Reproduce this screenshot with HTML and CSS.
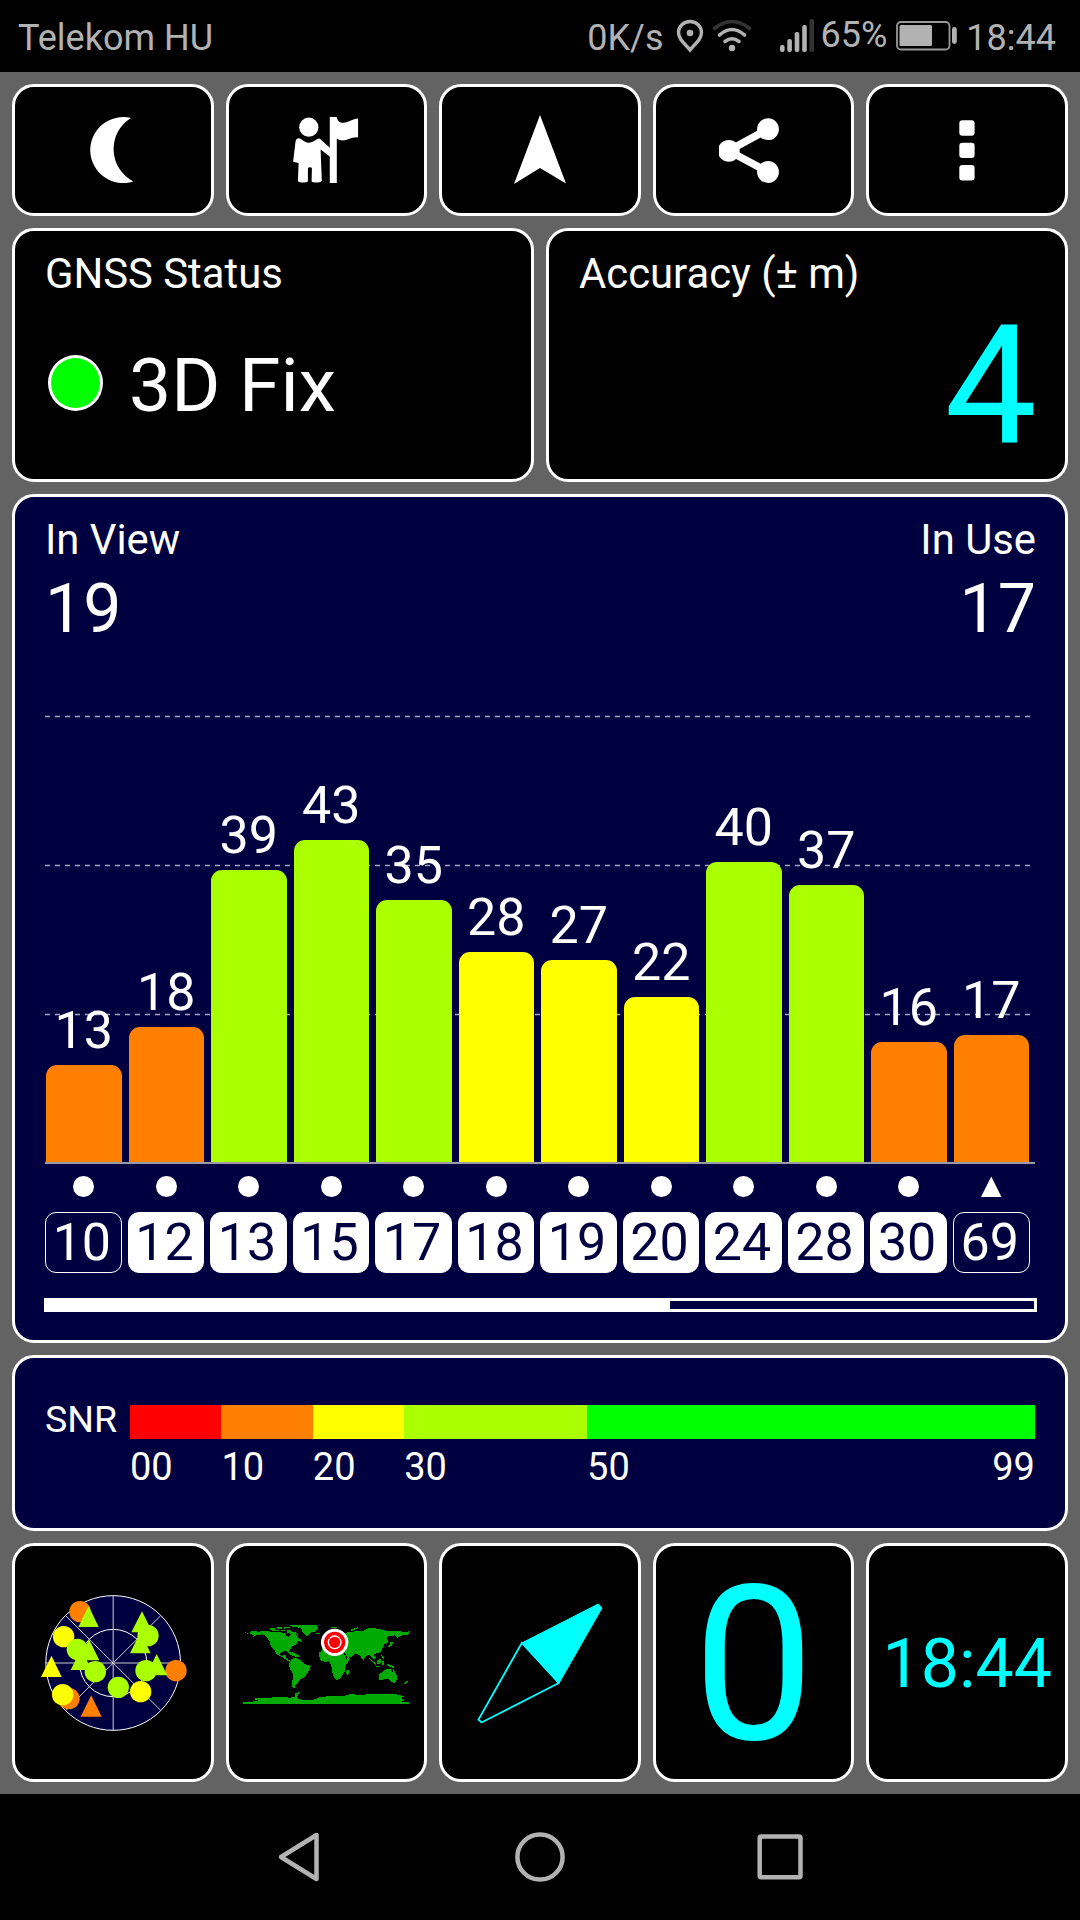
FILE: index.html
```
<!DOCTYPE html>
<html lang="en">
<head>
    <meta charset="UTF-8">
    <meta name="viewport" content="width=device-width, initial-scale=1.0">
    <title>GNSS Status</title>
    <link rel="stylesheet" href="styles.css">
</head>
<body>

<header class="statusbar">
    <span class="carrier">Telekom HU</span>
    <span class="speed">0K/s</span>
    <svg class="pin-icon" width="28" height="34" viewBox="0 0 28 34">
        <path d="M14 2.500C7.500 2.500 2.500 7.500 2.500 13.500C2.500 21 9.500 25 14 31C18.500 25 25.500 21 25.500 13.500C25.500 7.500 20.500 2.500 14 2.500Z" fill="none" stroke="#b2b2b2" stroke-width="3.400"/>
        <circle cx="14" cy="14" r="3.300" fill="#b2b2b2"/>
    </svg>
    <svg class="wifi-icon" width="40" height="34" viewBox="0 0 40 34" fill="none" stroke="#b2b2b2" stroke-width="3.600" stroke-linecap="round">
        <path d="M2.500 9.500Q20-4.500 37.500 9.500" stroke="#333"/>
        <path d="M7.500 16Q20 5 32.500 16"/>
        <path d="M13 22.500Q20 17 27 22.500"/>
        <circle cx="20" cy="29" r="3.200" fill="#b2b2b2" stroke="none"/>
    </svg>
    <svg class="signal-icon" width="36" height="34" viewBox="0 0 36 34" fill="#b2b2b2">
        <rect x="1" y="26" width="4.600" height="7" rx="2"/>
        <rect x="8.300" y="20" width="4.600" height="13" rx="2"/>
        <rect x="15.700" y="13" width="4.600" height="20" rx="2"/>
        <rect x="23.200" y="6" width="4.600" height="27" rx="2"/>
        <rect x="30.500" y="0" width="4.600" height="33" rx="2" fill="#333"/>
    </svg>
    <span class="percent">65%</span>
    <svg class="battery-icon" width="62" height="30" viewBox="0 0 62 30">
        <rect x="1" y="1" width="52.500" height="27.500" rx="4" fill="none" stroke="#999" stroke-width="1.800"/>
        <rect x="3.500" y="4" width="32.500" height="21" rx="1.500" fill="#b2b2b2"/>
        <rect x="56" y="6" width="4.800" height="17" rx="2.400" fill="#b2b2b2"/>
    </svg>
    <span class="clock">18:44</span>
</header>

<main class="dashboard">
    <nav class="row toolbar">
        <div class="tile">
            <svg width="70" height="70" viewBox="78 115 70 70">
                <path d="M131 118A33 33 0 1 0 133.300 181.500A36.500 36.500 0 0 1 131 118Z" fill="#fff"/>
            </svg>
        </div>
        <div class="tile">
            <svg width="70" height="70" viewBox="291.400 115 70 70" fill="#fff">
                <circle cx="309.200" cy="127.200" r="9.600"/>
                <path d="M299 138.300C302 138 304 142.500 309.200 142.700C314 142.500 316 139 320 138.500L330.500 148V156.800L321 149.500L322.200 181C320 183 314 183 312 181.500L312.300 168.500Q312 167.300 310.500 167.300Q308.300 167.300 308.300 168.500V181.500C306 183 300 183 298.300 181.200L299 163L293.500 161.800L296 141Q296.500 138.500 299 138.300Z"/>
                <path d="M330.200 117H337L338.500 121C345 126 351 119 358.500 118.500V137.500C351 136 345 144 337.200 138.500V183H330.200Z"/>
            </svg>
        </div>
        <div class="tile">
            <svg width="70" height="70" viewBox="505 115 70 70">
                <path d="M540 115L566 183.500L540 168L514 184Z" fill="#fff"/>
            </svg>
        </div>
        <div class="tile">
            <svg width="70" height="70" viewBox="719 115 70 70" fill="#fff" stroke="#fff">
                <path d="M768 129.200L728.500 150.800L768 172" fill="none" stroke-width="7.500"/>
                <circle cx="768" cy="129.200" r="10.900" stroke="none"/>
                <circle cx="768" cy="172" r="10.900" stroke="none"/>
                <circle cx="728.800" cy="150.800" r="10.900" stroke="none"/>
            </svg>
        </div>
        <div class="tile">
            <svg width="70" height="70" viewBox="932 115 70 70" fill="#fff">
                <rect x="959.300" y="120.200" width="15.300" height="15.600" rx="3"/>
                <rect x="959.300" y="142.800" width="15.300" height="15.200" rx="3"/>
                <rect x="959.300" y="165" width="15.300" height="15.400" rx="3"/>
            </svg>
        </div>
    </nav>

    <section class="row summary">
        <div class="card">
            <div class="label">GNSS Status</div>
            <div class="fix">
                <span class="fix-dot"></span>
                <span class="fix-text">3D Fix</span>
            </div>
        </div>
        <div class="card">
            <div class="label">Accuracy (± m)</div>
            <div class="accuracy">4</div>
        </div>
    </section>

    <section class="card blue satellites">
        <div class="counts">
            <div>
                <div class="label">In View</div>
                <div class="count">19</div>
            </div>
            <div class="right">
                <div class="label">In Use</div>
                <div class="count">17</div>
            </div>
        </div>

        <div class="plot">
            <svg class="gridlines" width="990" height="522" viewBox="0 0 990 522" fill="none" stroke="#fff" stroke-opacity="0.650" stroke-width="1.500" stroke-dasharray="5 5">
                <path d="M0 75.500H985M0 224.500H985M0 373.500H985"/>
            </svg>
            <div class="bars">
                <div class="col"><span>13</span><div class="bar orange" style="height: 97.5px"></div></div>
                <div class="col"><span>18</span><div class="bar orange" style="height: 135px"></div></div>
                <div class="col"><span>39</span><div class="bar lime" style="height: 292.5px"></div></div>
                <div class="col"><span>43</span><div class="bar lime" style="height: 322.5px"></div></div>
                <div class="col"><span>35</span><div class="bar lime" style="height: 262.5px"></div></div>
                <div class="col"><span>28</span><div class="bar yellow" style="height: 210px"></div></div>
                <div class="col"><span>27</span><div class="bar yellow" style="height: 202.5px"></div></div>
                <div class="col"><span>22</span><div class="bar yellow" style="height: 165px"></div></div>
                <div class="col"><span>40</span><div class="bar lime" style="height: 300px"></div></div>
                <div class="col"><span>37</span><div class="bar lime" style="height: 277.5px"></div></div>
                <div class="col"><span>16</span><div class="bar orange" style="height: 120px"></div></div>
                <div class="col"><span>17</span><div class="bar orange" style="height: 127.5px"></div></div>
            </div>
        </div>

        <div class="markers">
            <i class="dot"></i><i class="dot"></i><i class="dot"></i><i class="dot"></i>
            <i class="dot"></i><i class="dot"></i><i class="dot"></i><i class="dot"></i>
            <i class="dot"></i><i class="dot"></i><i class="dot"></i><i class="tri"></i>
        </div>

        <div class="ids">
            <span class="unused">10</span>
            <span>12</span>
            <span>13</span>
            <span>15</span>
            <span>17</span>
            <span>18</span>
            <span>19</span>
            <span>20</span>
            <span>24</span>
            <span>28</span>
            <span>30</span>
            <span class="unused">69</span>
        </div>

        <div class="scroll"><div class="scroll-fill" style="width: 623px"></div></div>
    </section>

    <section class="card blue snr">
        <span class="snr-title">SNR</span>
        <div class="scale">
            <div class="step"><div class="swatch red"></div>00</div>
            <div class="step"><div class="swatch orange"></div>10</div>
            <div class="step"><div class="swatch yellow"></div>20</div>
            <div class="step"><div class="swatch lime"></div>30</div>
            <div class="step"><div class="swatch green"></div><div class="ends"><span>50</span><span>99</span></div></div>
        </div>
    </section>

    <section class="row widgets">
        <!-- sky plot -->
        <div class="tile">
            <svg width="170" height="170" viewBox="-7 -7 510 510">
                <circle cx="248.500" cy="248" r="202" fill="#000040" stroke="#fff" stroke-width="3"/>
                <circle cx="248.500" cy="248" r="101" fill="none" stroke="#fff" stroke-width="3"/>
                <path d="M248.500 46V450M46.500 248H450.500M106 106L391 390M106 390L391 106" stroke="#ccc" stroke-width="3"/>
                <g fill="#ff8000">
                    <circle cx="149" cy="94" r="32"/>
                    <circle cx="116" cy="355" r="32"/>
                    <circle cx="437" cy="271" r="32"/>
                    <path d="M182.500 345L214 409H151Z"/>
                </g>
                <g fill="#ffff00">
                    <circle cx="100" cy="169" r="32"/>
                    <circle cx="97" cy="343" r="32"/>
                    <circle cx="331" cy="334" r="32"/>
                    <path d="M63.500 226L94 290H32Z"/>
                </g>
                <g fill="#aaff00">
                    <path d="M175 77L205 140H144ZM335 93L366 156H303ZM330 156L361 219H299ZM176 177L207 240H145ZM152 206L184 269H121ZM379 221L411 285H348Z"/>
                    <circle cx="353" cy="166" r="32"/>
                    <circle cx="141" cy="207" r="32"/>
                    <circle cx="195" cy="274" r="32"/>
                    <circle cx="264" cy="321" r="32"/>
                    <circle cx="347" cy="271" r="32"/>
                </g>
            </svg>
        </div>
        <!-- world map with current position -->
        <div class="tile">
            <svg class="map" width="190" height="120" viewBox="3 7 570 360">
                <g fill="#00aa00" shape-rendering="crispEdges">
                    <path d="M40 94L48 96L52 99L60 96L65 91L84 93L110 91L130 95L150 95L165 98L170 106L176 108L182 103L180 96L186 92L194 98L202 106L204 112L212 116L214 123L203 122L198 132L186 138L180 148L176 150L178 159L172 152L160 152L152 156L150 164L158 166L166 161L168 171L176 178L184 181L178 184L164 174L150 166L140 162L134 148L122 136L118 120L108 106L98 101L82 103L66 111L72 104L62 99Z"/>
                    <path d="M120 83H134V88H148V92H126V87H120ZM140 80H156V84H140ZM152 87H166V92H152ZM162 78H180V82H166V86H162ZM170 87H184V93L198 95L204 103L196 100L184 97H170ZM176 152L190 156L206 164L206 170L190 166L176 160Z"/>
                    <path d="M176 75L196 72L230 73L262 73L260 78L264 82L256 92L242 96L236 104L228 106L220 98L214 92L216 85L204 80L184 77Z"/>
                    <path d="M258 96L270 97L266 101H258ZM304 79L322 78L318 83H304ZM360 87L384 80L382 84L364 91Z"/>
                    <path d="M184 175L196 171L206 176L214 180L222 190L234 193L242 197L240 206L230 220L222 231L208 238L204 248L196 254L196 264L188 261L186 248L190 222L180 204L176 192Z"/>
                    <path d="M276 150L290 144L314 149L342 154L344 164L349 174L361 171L350 190L344 198L344 212L336 224L330 235L318 238L311 228L306 210L304 194L298 182L282 183L272 179L267 166L268 155Z"/>
                    <path d="M276 148L276 136L284 128L288 112L304 92L340 98L356 94L378 92L400 90L420 81L442 84L470 91L500 90L520 94L537 92V101L522 103L508 107L502 114L496 104L476 106L470 112L476 124L462 131L458 142L452 153L440 158L430 160L438 172L432 177L422 168L416 162L406 166L400 179L394 170L390 163L374 158L366 168L352 172L344 156Z"/>
                    <path d="M350 210L358 205L357 218L351 223L347 218ZM480 122L490 126L484 136L472 140L480 132ZM418 173L440 190L436 194L420 178ZM440 180L454 174L452 188L442 190ZM456 180H462V192H456ZM436 196L462 200H442ZM454 164L460 166L462 176L456 172ZM466 188L490 196L494 203L476 198ZM532 239L535 243L524 251L519 251Z"/>
                    <path d="M446 223L454 216L460 212L468 206H482L482 211L488 213L491 205L496 217L502 228L500 238L493 248L484 243L478 236L468 234L452 239L446 237Z"/>
                    <path d="M40 303H66L86 299L72 296L80 291L120 291L150 289L180 291L196 287V278L210 273L204 284L200 292L216 297L234 298L252 297L272 289L304 286L346 285L364 279L384 284L430 279L490 279L514 285L524 287L514 292L522 299L516 303H537V311H40Z"/>
                </g>
                <circle cx="314" cy="125" r="41" fill="#fff"/>
                <circle cx="314" cy="125" r="32" fill="#f00"/>
                <circle cx="314" cy="125" r="19" fill="#f00" stroke="#fff" stroke-width="4"/>
            </svg>
        </div>
        <!-- compass needle -->
        <div class="tile">
            <svg width="140" height="140" viewBox="470 1592 140 140" stroke="#0ff" stroke-width="1.800">
                <path d="M521.800 1642L598.300 1603L602 1607L558.800 1682.500Z" fill="#0ff" stroke-width="1"/>
                <path d="M521.800 1642L558.800 1682L481.500 1721.500L478.500 1718.500Z" fill="none"/>
            </svg>
        </div>
        <div class="tile speed-value">0</div>
        <div class="tile time-value">18:44</div>
    </section>
</main>

<footer class="navbar">
    <svg width="50" height="54" viewBox="0 0 50 54">
        <path d="M6 27L41.500 5V49Z" fill="none" stroke="#b2b2b2" stroke-width="4.500" stroke-linejoin="round"/>
    </svg>
    <svg width="50" height="54" viewBox="0 0 50 54">
        <circle cx="25" cy="27" r="22.600" fill="none" stroke="#b2b2b2" stroke-width="4.500"/>
    </svg>
    <svg width="50" height="54" viewBox="0 0 50 54">
        <rect x="4.700" y="6.500" width="40.800" height="40.800" rx="1.500" fill="none" stroke="#b2b2b2" stroke-width="4.500"/>
    </svg>
</footer>

</body>
</html>
```
FILE: styles.css
```
* {
    box-sizing: border-box;
}
body {
    margin: 0;
    width: 1080px;
    height: 1920px;
    display: flex;
    flex-direction: column;
    overflow: hidden;
    background-color: #000;
    color: #fff;
    font-family: Roboto, sans-serif;
}
svg {
    display: block;
    flex-shrink: 0;
}

/* status bar */
.statusbar {
    height: 72px;
    display: flex;
    align-items: flex-start;
    padding: 16px 24px 0 18px;
    color: #b2b2b2;
    font-size: 36px;
    line-height: 44px;
}
.speed {
    margin-left: auto;
}
.pin-icon {
    margin: 3px 0 0 12px;
}
.wifi-icon {
    margin: 3px 0 0 8px;
}
.signal-icon {
    margin: 3px 0 0 27px;
}
.percent {
    margin: -3px 0 0 6px;
}
.battery-icon {
    margin: 5px 0 0 9px;
}
.clock {
    margin-left: 8px;
}

/* dashboard */
.dashboard {
    height: 1722px;
    padding: 12px;
    display: grid;
    grid-template-rows: 132px 254.4px 848.8px 176px 239px;
    gap: 12px;
    background-color: #636363;
}
.row {
    display: grid;
    grid-template-columns: repeat(5, 1fr);
    gap: 12px;
}
.summary {
    grid-template-columns: 1fr 1fr;
}
.tile, .card {
    min-width: 0;
    border: 3px solid #fff;
    border-radius: 22px;
    background-color: #000;
}
.tile {
    display: flex;
    align-items: center;
    justify-content: center;
}
.card {
    padding: 18px 29px 0 30px;
}
.blue {
    background-color: #000040;
}
.label {
    font-size: 41.8px;
    line-height: 50px;
}
.right {
    text-align: right;
}
.fix {
    display: flex;
    align-items: center;
    margin: 42px 0 0 3px;
}
.fix-dot {
    width: 55px;
    height: 56px;
    margin: 0 26px 4px 0;
    border: 3px solid #fff;
    border-radius: 50%;
    background-color: #0f0;
}
.fix-text {
    font-size: 75px;
    line-height: 88px;
}
.accuracy {
    margin: 7px -1px 0 0;
    text-align: right;
    color: #0ff;
    font-size: 164.5px;
    line-height: 160px;
}

/* satellite chart */
.satellites {
    padding-top: 18px;
}
.counts {
    display: flex;
    justify-content: space-between;
}
.count {
    margin-top: 12px;
    font-size: 68px;
    line-height: 64px;
}
.plot {
    position: relative;
    height: 523px;
    margin: 0 1px 0 0;
    border-bottom: 2px solid #9999a8;
}
.gridlines {
    position: absolute;
    top: 0;
    left: 0;
}
.bars, .markers, .ids {
    display: grid;
    grid-template-columns: repeat(12, 1fr);
    column-gap: 7px;
    width: 983px;
}
.bars {
    position: relative;
    height: 521px;
    margin-left: 1px;
}
.col {
    display: flex;
    flex-direction: column;
    justify-content: flex-end;
    text-align: center;
    font-size: 52px;
    line-height: 60px;
}
.col span {
    margin-bottom: 4px;
}
.bar {
    border-radius: 11px 11px 0 0;
}
.red { background-color: #ff0000; }
.orange { background-color: #ff8000; }
.yellow { background-color: #ffff00; }
.lime { background-color: #aaff00; }
.green { background-color: #00ff00; }
.markers {
    height: 48px;
    margin-left: 1px;
    padding-bottom: 3px;
    align-items: center;
    justify-items: center;
}
.dot {
    width: 21px;
    height: 21px;
    border-radius: 50%;
    background-color: #fff;
}
.tri {
    width: 21px;
    height: 21px;
    background-color: #fff;
    clip-path: polygon(50% 0, 100% 100%, 0 100%);
}
.ids {
    width: 984.5px;
    column-gap: 5.8px;
}
.ids span {
    height: 61px;
    padding-right: 3px;
    border: 1.5px solid #fff;
    border-radius: 11px;
    background-color: #fff;
    color: #000040;
    text-align: center;
    font-size: 52px;
    line-height: 59px;
}
.ids .unused {
    background-color: #000040;
    color: #fff;
}
.scroll {
    width: 993px;
    height: 14px;
    margin: 25px 0 0 -1px;
    border: 3px solid #fff;
}
.scroll-fill {
    height: 8px;
    background-color: #fff;
}

/* SNR legend */
.snr {
    display: flex;
    padding: 47px 30px 0 30px;
    font-size: 38px;
}
.snr-title {
    width: 85px;
    font-size: 37.5px;
    line-height: 28px;
}
.scale {
    flex: 1;
    display: grid;
    grid-template-columns: 10fr 10fr 10fr 20fr 49fr;
    line-height: 57px;
}
.swatch {
    height: 34px;
}
.step {
    min-width: 0;
}
.ends {
    display: flex;
    justify-content: space-between;
}

/* bottom widgets */
.speed-value, .time-value {
    color: #0ff;
}
.speed-value {
    padding-top: 7px;
    font-size: 216px;
    line-height: 200px;
}
.time-value {
    padding-top: 2px;
    font-size: 68px;
}

/* navigation bar */
.navbar {
    flex: 1;
    display: flex;
    align-items: center;
    justify-content: center;
    gap: 190px;
}
```
